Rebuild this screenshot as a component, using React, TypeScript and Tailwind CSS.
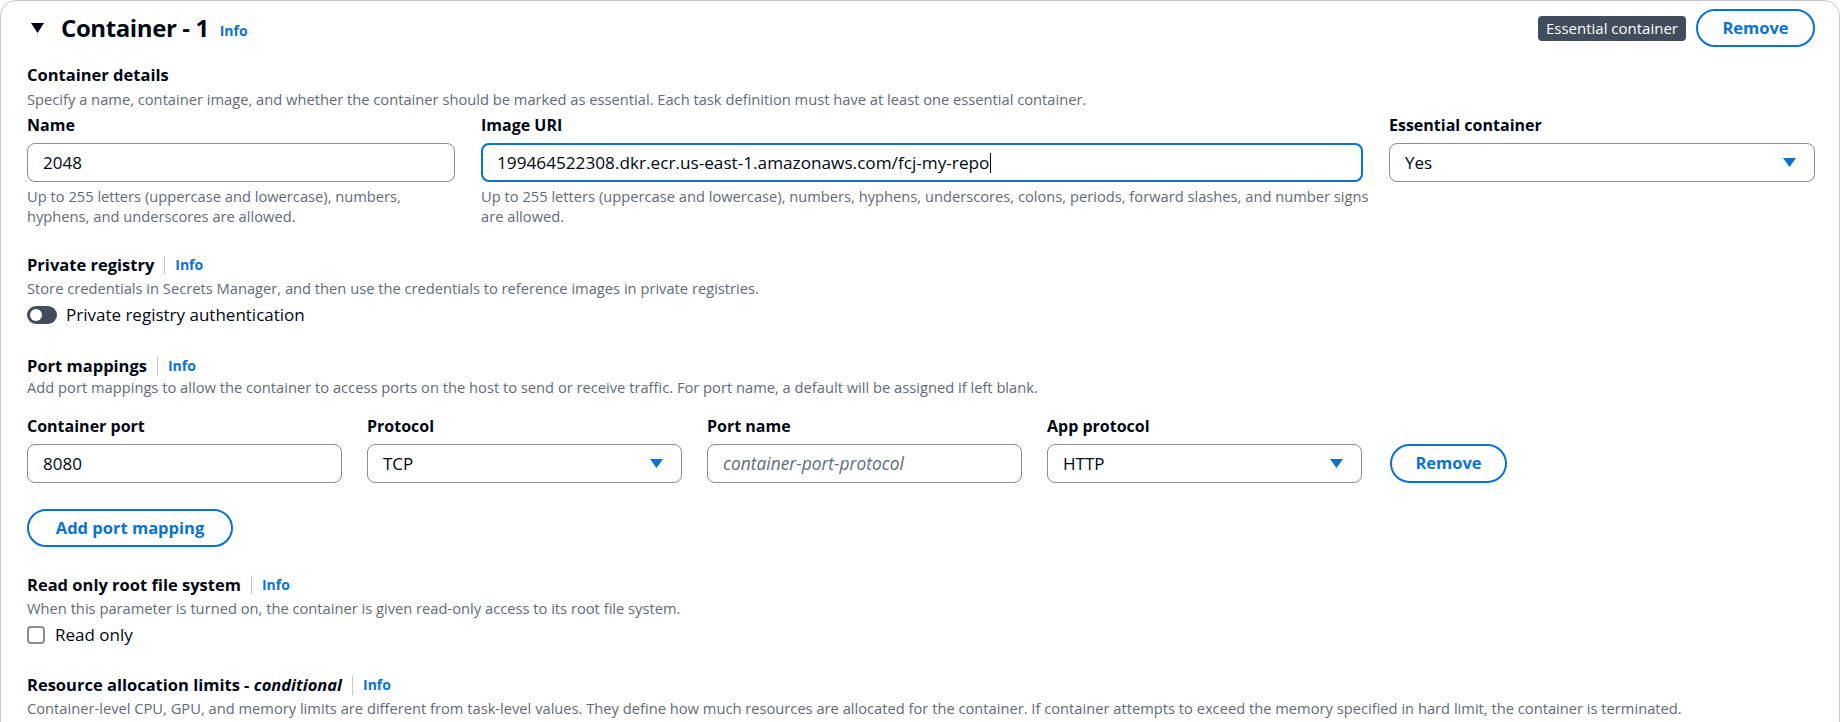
import { useState } from 'react';

function Info() {
  return <span className="text-[14px] font-bold text-[#0972d3] leading-[22px]">Info</span>;
}

function SectionTitle({ children }: { children: React.ReactNode }) {
  return (
    <div className="flex items-center h-[22px]">
      <span className="text-[16.5px] font-bold text-[#000716] leading-[22px]">{children}</span>
      <span className="mx-[10px] h-[19px] w-px bg-[#c6c6cd]" />
      <Info />
    </div>
  );
}

function Desc({ children, className = '' }: { children: React.ReactNode; className?: string }) {
  return <p className={`text-[14.7px] leading-[20px] text-[#5f6b7a] ${className}`}>{children}</p>;
}

function Label({ children }: { children: React.ReactNode }) {
  return <div className="text-[16px] font-bold leading-[22px] text-[#000716]">{children}</div>;
}

function Caret() {
  return (
    <svg width="13" height="9" viewBox="0 0 13 9" className="shrink-0">
      <path d="M0 0 H13 L6.5 9 Z" fill="#0972d3" />
    </svg>
  );
}

function Select({ value }: { value: string }) {
  return (
    <div className="flex h-[39px] items-center justify-between rounded-[8px] border border-[#8c8c94] bg-white pl-[15px] pr-[18px]">
      <span className="text-[17px] text-[#000716]">{value}</span>
      <Caret />
    </div>
  );
}

function Input({ value, placeholder }: { value?: string; placeholder?: string }) {
  return (
    <div className="flex h-[39px] items-center rounded-[8px] border border-[#8c8c94] bg-white px-[15px]">
      {value ? (
        <span className="text-[17px] text-[#000716]">{value}</span>
      ) : (
        <span className="text-[17.4px] italic text-[#5f6b7a]">{placeholder}</span>
      )}
    </div>
  );
}

export default function App() {
  const [readOnly, setReadOnly] = useState(false);

  return (
    <div className="min-h-[722px] bg-white font-['Open_Sans',sans-serif] text-[#000716]">
      <div className="w-[1840px] h-[740px] rounded-[16px] border border-[#c6c6cd] pl-[26px] pr-[24px] pt-[8px]">
        {/* Header */}
        <div className="flex h-[38px] items-center justify-between">
          <div className="flex items-center">
            <svg width="13" height="10" viewBox="0 0 13 10" className="ml-[4px] mr-[17px]">
              <path d="M0 0 H13 L6.5 10 Z" fill="#000716" />
            </svg>
            <h2 className="text-[24px] font-bold leading-[30px] tracking-[-0.4px]">Container - 1</h2>
            <span className="ml-[11px] mt-[4px]"><Info /></span>
          </div>
          <div className="flex items-center gap-[10px]">
            <span className="rounded-[4px] bg-[#414d5c] px-[8px] py-[2px] text-[15px] leading-[21px] text-white">
              Essential container
            </span>
            <button className="h-[38px] w-[119px] rounded-full border-2 border-[#0972d3] text-[16.5px] font-bold text-[#0972d3]">
              Remove
            </button>
          </div>
        </div>

        {/* Container details */}
        <div className="mt-[17px] text-[16.5px] font-bold leading-[22px]">Container details</div>
        <Desc className="mt-[3px]">
          Specify a name, container image, and whether the container should be marked as essential. Each task definition must have at least one essential container.
        </Desc>
        <div className="mt-[5px] grid grid-cols-[428px_882px_426px] gap-x-[26px]">
          <div>
            <Label>Name</Label>
            <div className="mt-[7px]"><Input value="2048" /></div>
            <Desc className="mt-[4px]">
              <span className="block whitespace-nowrap">Up to 255 letters (uppercase and lowercase), numbers,</span>
              hyphens, and underscores are allowed.
            </Desc>
          </div>
          <div>
            <Label>Image URI</Label>
            <div className="mt-[7px] flex h-[39px] items-center rounded-[8px] border-2 border-[#0972d3] bg-white px-[14px]">
              <span className="text-[17.2px] text-[#000716]">199464522308.dkr.ecr.us-east-1.amazonaws.com/fcj-my-repo</span>
              <span className="ml-px h-[20px] w-px bg-[#000716]" />
            </div>
            <Desc className="mt-[4px]">
              <span className="block whitespace-nowrap">
                Up to 255 letters (uppercase and lowercase), numbers, hyphens, underscores, colons, periods, forward slashes, and number signs
              </span>
              are allowed.
            </Desc>
          </div>
          <div>
            <Label>Essential container</Label>
            <div className="mt-[7px]"><Select value="Yes" /></div>
          </div>
        </div>

        {/* Private registry */}
        <div className="mt-[28px]"><SectionTitle>Private registry</SectionTitle></div>
        <Desc className="mt-[2px]">Store credentials in Secrets Manager, and then use the credentials to reference images in private registries.</Desc>
        <div className="mt-[5px] flex h-[24px] items-center gap-[9px]">
          <span className="relative inline-block h-[18px] w-[30px] rounded-full bg-[#414d5c]">
            <span className="absolute left-[3px] top-[3px] h-[12px] w-[12px] rounded-full bg-white" />
          </span>
          <span className="text-[17px] leading-[24px]">Private registry authentication</span>
        </div>

        {/* Port mappings */}
        <div className="mt-[28px]"><SectionTitle>Port mappings</SectionTitle></div>
        <Desc>Add port mappings to allow the container to access ports on the host to send or receive traffic. For port name, a default will be assigned if left blank.</Desc>
        <div className="mt-[18px] flex items-end gap-x-[25px]">
          <div className="w-[315px]">
            <Label>Container port</Label>
            <div className="mt-[7px]"><Input value="8080" /></div>
          </div>
          <div className="w-[315px]">
            <Label>Protocol</Label>
            <div className="mt-[7px]"><Select value="TCP" /></div>
          </div>
          <div className="w-[315px]">
            <Label>Port name</Label>
            <div className="mt-[7px]"><Input placeholder="container-port-protocol" /></div>
          </div>
          <div className="w-[315px]">
            <Label>App protocol</Label>
            <div className="mt-[7px]"><Select value="HTTP" /></div>
          </div>
          <button className="ml-[3px] h-[39px] w-[117px] rounded-full border-2 border-[#0972d3] text-[16.5px] font-bold text-[#0972d3]">
            Remove
          </button>
        </div>
        <button className="mt-[26px] h-[38px] w-[206px] rounded-full border-2 border-[#0972d3] text-[16.5px] font-bold text-[#0972d3]">
          Add port mapping
        </button>

        {/* Read only */}
        <div className="mt-[27px]"><SectionTitle>Read only root file system</SectionTitle></div>
        <Desc className="mt-[2px]">When this parameter is turned on, the container is given read-only access to its root file system.</Desc>
        <label className="mt-[5px] flex h-[24px] items-center gap-[10px]">
          <span
            onClick={() => setReadOnly(!readOnly)}
            className="h-[18px] w-[18px] rounded-[4px] border-2 border-[#8c8c94] bg-white"
          />
          <span className="text-[17px] leading-[24px]">Read only</span>
        </label>

        {/* Resource allocation */}
        <div className="mt-[27px] flex items-center h-[22px]">
          <span className="text-[16.5px] font-bold leading-[22px]">
            Resource allocation limits - <i>conditional</i>
          </span>
          <span className="mx-[10px] h-[19px] w-px bg-[#c6c6cd]" />
          <Info />
        </div>
        <Desc className="mt-[2px]">
          Container-level CPU, GPU, and memory limits are different from task-level values. They define how much resources are allocated for the container. If container attempts to exceed the memory specified in hard limit, the container is terminated.
        </Desc>
      </div>
    </div>
  );
}
